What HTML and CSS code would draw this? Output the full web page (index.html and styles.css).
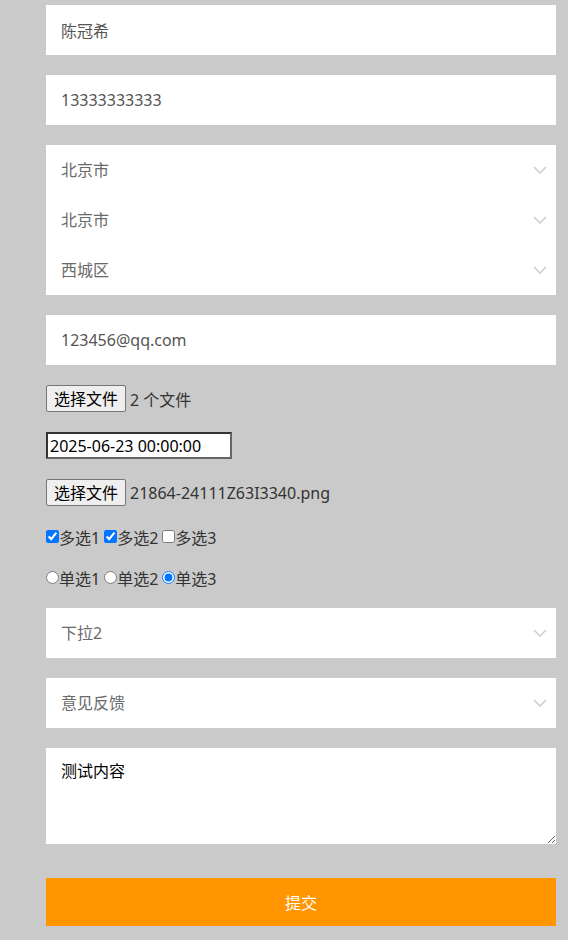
FILE: index.html
```html
<!DOCTYPE html>
<html lang="zh-CN">
<head>
  <meta charset="UTF-8">
  <meta name="viewport" content="width=device-width, initial-scale=1.0">
  <title>表单测试</title>
  <link rel="stylesheet" href="styles.css">
</head>
<body>
  <form class="form" onsubmit="return false;">
    <div class="field">
      <input class="text" type="text" name="name" value="陈冠希">
    </div>

    <div class="field">
      <input class="text" type="tel" name="phone" value="13333333333">
    </div>

    <div class="field group">
      <div class="pick">
        <select name="province"><option>北京市</option></select>
        <svg class="arrow" width="14" height="8" viewBox="0 0 14 8"><path d="M1 1 L7 7 L13 1" fill="none" stroke="#cfcfcf" stroke-width="1.6"/></svg>
      </div>
      <div class="pick">
        <select name="city"><option>北京市</option></select>
        <svg class="arrow" width="14" height="8" viewBox="0 0 14 8"><path d="M1 1 L7 7 L13 1" fill="none" stroke="#cfcfcf" stroke-width="1.6"/></svg>
      </div>
      <div class="pick">
        <select name="area"><option>西城区</option></select>
        <svg class="arrow" width="14" height="8" viewBox="0 0 14 8"><path d="M1 1 L7 7 L13 1" fill="none" stroke="#cfcfcf" stroke-width="1.6"/></svg>
      </div>
    </div>

    <div class="field">
      <input class="text" type="email" name="email" value="123456@qq.com">
    </div>

    <div class="line">
      <button type="button" class="filebtn">选择文件</button>
      <span class="filename">2 个文件</span>
    </div>

    <div class="line">
      <input class="date" type="text" name="time" value="2025-06-23 00:00:00">
    </div>

    <div class="line">
      <button type="button" class="filebtn">选择文件</button>
      <span class="filename">21864-24111Z63I3340.png</span>
    </div>

    <div class="line checks">
      <label><input type="checkbox" checked>多选1</label>
      <label><input type="checkbox" checked>多选2</label>
      <label><input type="checkbox">多选3</label>
    </div>

    <div class="line checks">
      <label><input type="radio" name="r">单选1</label>
      <label><input type="radio" name="r">单选2</label>
      <label><input type="radio" name="r" checked>单选3</label>
    </div>

    <div class="field">
      <div class="pick">
        <select name="drop"><option>下拉2</option></select>
        <svg class="arrow" width="14" height="8" viewBox="0 0 14 8"><path d="M1 1 L7 7 L13 1" fill="none" stroke="#cfcfcf" stroke-width="1.6"/></svg>
      </div>
    </div>

    <div class="field">
      <div class="pick">
        <select name="type"><option>意见反馈</option></select>
        <svg class="arrow" width="14" height="8" viewBox="0 0 14 8"><path d="M1 1 L7 7 L13 1" fill="none" stroke="#cfcfcf" stroke-width="1.6"/></svg>
      </div>
    </div>

    <div class="field">
      <textarea class="area" name="content">测试内容</textarea>
    </div>

    <button type="submit" class="submit">提交</button>
  </form>
</body>
</html>
```

FILE: styles.css
```css
body { margin: 0; background: #cacaca; font-family: "Noto Sans", "Noto Sans CJK SC", sans-serif; font-size: 16px; color: #333; }
.form { width: 510px; margin: 0 0 0 46px; padding: 5px 0 14px; }
.field { margin-bottom: 20px; background: #fff; }
.text { display: block; width: 100%; height: 50px; box-sizing: border-box; border: 0; padding: 0 15px; font: inherit; color: #555; background: #fff; outline: none; }
.pick { display: flex; align-items: center; height: 50px; background: #fff; }
.pick select { flex: 1; height: 50px; border: 0; padding: 0 15px; font: inherit; color: #6a6a6a; background: transparent; appearance: none; -webkit-appearance: none; outline: none; }
.arrow { flex: none; margin: 0 9px 0 -23px; pointer-events: none; }
.line { display: flex; align-items: center; height: 27px; margin-bottom: 20px; }
.filebtn { height: 27px; padding: 0 7px; font: inherit; font-size: 16px; line-height: 1; color: #000; background: #efefef; border: 1px solid #767676; border-radius: 2px; }
.filename { margin-left: 4px; color: #333; }
.date { width: 186px; height: 27px; box-sizing: border-box; padding: 0 2px; font: inherit; color: #000; background: #fff; border: 2px solid #333; border-right-color: #666; border-bottom-color: #666; outline: none; }
.checks { height: 21px; gap: 4px; color: #333; }
.checks label { display: flex; align-items: center; }
.checks input { margin: 0; width: 13px; height: 13px; }
.area { display: block; width: 100%; height: 96px; box-sizing: border-box; border: 0; padding: 13px 15px; font: inherit; line-height: 1.3; color: #000; background: #fff; resize: vertical; outline: none; }
.submit { display: block; width: 100%; height: 48px; margin-top: 34px; border: 0; background: #ff9500; color: #fff; font: inherit; }
```
